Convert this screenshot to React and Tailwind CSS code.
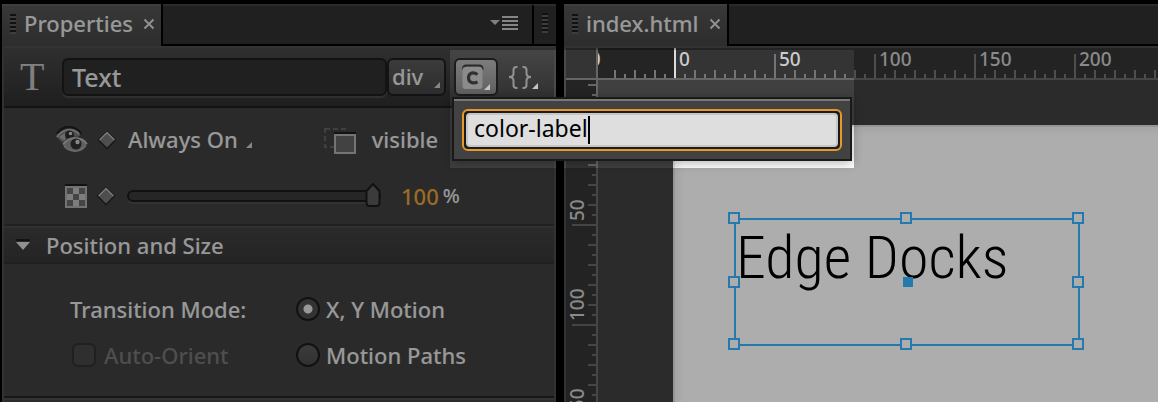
import { useState } from "react";

const range = (from, to) =>
  Array.from({ length: to - from + 1 }, (_, i) => from + i);

/* Ruler tick lengths: every 50 units, every 10 units, every 5 units. */
const tickLength = (i) => (i % 10 === 0 ? 24 : i % 2 === 0 ? 8 : 4);

function Grip() {
  return (
    <svg className="h-5 w-1.5 shrink-0" viewBox="0 0 6 20" aria-hidden="true">
      {range(0, 4).map((i) => (
        <g key={i}>
          <rect y={i * 4} width="6" height="2" fill="#1a1a1a" />
          <rect y={i * 4 + 2} width="6" height="2" fill="#5a5a5a" />
        </g>
      ))}
    </svg>
  );
}

function Corner({ className = "" }) {
  return (
    <svg className={`h-1.5 w-1.5 shrink-0 ${className}`} viewBox="0 0 6 6" aria-hidden="true">
      <path d="M6 0V6H0Z" fill="#c4c4c4" />
    </svg>
  );
}

function Tab({ title }) {
  return (
    <div className="flex h-[42px] items-center border-t-2 border-[#5c5c5c] bg-linear-to-b from-[#525252] to-[#434343] pr-1.5 pb-1 pl-2 text-[22px]">
      <Grip />
      <span className="ml-2 pb-0.5 leading-7">{title}</span>
      <button aria-label={`Close ${title}`} className="ml-2.5">
        <svg className="h-3 w-3" viewBox="0 0 12 12" fill="none" stroke="#d4d4d4" strokeWidth="2">
          <path d="M1.5 1.5L10.5 10.5M10.5 1.5L1.5 10.5" />
        </svg>
      </button>
    </div>
  );
}

function Diamond({ label }) {
  return (
    <button aria-label={label} className="shrink-0">
      <svg className="h-[22px] w-[22px]" viewBox="0 0 22 22">
        <path d="M11 0.500L21.500 11L11 21.500L0.500 11Z" fill="#242424" stroke="#4a4a4a" />
        <path d="M11 3.500L18.500 11L11 18.500L3.500 11Z" fill="#747474" />
        <path d="M3.500 11L11 3.500L18.500 11" fill="none" stroke="#b4b4b4" strokeWidth="1.500" />
      </svg>
    </button>
  );
}

function EyesIcon() {
  return (
    <svg className="h-7 w-8 shrink-0" viewBox="0 0 32 28" aria-hidden="true">
      <path d="M1 8C5 2 10 0 15 1C20 2 23 4 25 8" fill="none" stroke="#1c1c1c" strokeWidth="2" />
      <path d="M1 11C5 4 10 2.500 15 3C20 4 23 6 24.500 9L19 13L8 17C5 16 3 13 1 11Z" fill="#747474" />
      <path d="M1 11C6 3 17 1 23 8" fill="none" stroke="#a4a4a4" strokeWidth="2" />
      <path d="M3 11C6 9 7 8 10 7L9 14C6 14 5 12 3 11Z" fill="#a0a0a0" />
      <circle cx="13.500" cy="9" r="4.500" fill="#2c2c2c" />
      <circle cx="14.500" cy="7.500" r="1.800" fill="#c4c4c4" />
      <path d="M6 18C11 9 25 8 32 17C27 28 12 29 6 18Z" fill="#2c2c2c" />
      <path d="M7 19C12 11 25 10 31 18C25 27 13 27 7 19Z" fill="#8c8c8c" />
      <path d="M7 18.500C13 10 25 10 31 18" fill="none" stroke="#b0b0b0" strokeWidth="2" />
      <path d="M8 20C14 27 24 27 30 19.500" fill="none" stroke="#a0a0a0" strokeWidth="1.500" />
      <circle cx="20" cy="18" r="5.500" fill="#303030" />
      <circle cx="21.500" cy="16" r="2.200" fill="#c8c8c8" />
    </svg>
  );
}

function CheckerIcon() {
  return (
    <svg className="h-6 w-[22px] shrink-0" viewBox="0 0 22 24" aria-hidden="true">
      <rect width="22" height="2" fill="#1c1c1c" />
      <rect y="2" width="22" height="22" fill="#a8a8a8" />
      {[[2, 4], [14, 4], [8, 10], [2, 16], [14, 16]].map(([x, y]) => (
        <rect key={`${x}-${y}`} x={x} y={y} width="6" height="6" fill="#666666" />
      ))}
      {[[8, 4], [2, 10], [14, 10], [8, 16]].map(([x, y]) => (
        <rect key={`${x}-${y}`} x={x} y={y} width="6" height="6" fill="#b8b8b8" />
      ))}
    </svg>
  );
}

function OverflowIcon() {
  return (
    <svg className="h-[27px] w-8 shrink-0" viewBox="0 0 32 27" aria-hidden="true">
      <rect x="1" y="2" width="20" height="18" fill="none" stroke="#5f5f5f" strokeWidth="2" strokeDasharray="5 3" />
      <rect x="10" y="5" width="22" height="2" fill="#1c1c1c" />
      <rect x="11" y="8" width="20" height="18" fill="#626262" stroke="#acacac" strokeWidth="2" />
    </svg>
  );
}

function ClassIcon() {
  return (
    <svg className="h-[26px] w-[22px]" viewBox="0 0 22 26" aria-hidden="true">
      <path d="M1 6V5Q1 1.500 4.500 1.500H17Q20.500 1.500 20.500 5V6" fill="none" stroke="#2a2a2a" strokeWidth="2" />
      <rect x="0.500" y="3" width="20" height="22" rx="3" fill="#8b8b8b" />
      <path d="M15.500 10.500C10 7 6.500 10 6.500 13.800C6.500 18 10.500 20.500 15.500 17.800" fill="none" stroke="#303030" strokeWidth="3.200" />
    </svg>
  );
}

function BracesIcon() {
  return (
    <svg className="h-6 w-6" viewBox="0 0 24 24" fill="none" stroke="#929292" strokeWidth="2" aria-hidden="true">
      <path d="M9.500 2H8.500Q5.500 2 5.500 5V8.500Q5.500 12 1 12Q5.500 12 5.500 15.500V20Q5.500 23 8.500 23H9.500" />
      <path d="M14.500 2H15.500Q18.500 2 18.500 5V8.500Q18.500 12 23 12Q18.500 12 18.500 15.500V20Q18.500 23 15.500 23H14.500" />
    </svg>
  );
}

function ClassPicker() {
  const [value, setValue] = useState("color-label");
  return (
    <div className="relative ml-2">
      <button
        aria-label="Class"
        className="flex h-[38px] w-11 items-center rounded-md border-2 border-[#1c1c1c] bg-linear-to-b from-[#7c7c7c] to-[#606060] pl-1.5"
      >
        <ClassIcon />
        <Corner className="mb-1 self-end" />
      </button>
      {/* Spotlight that dims everything but the picker */}
      <div className="pointer-events-none absolute -top-2 -left-1 z-10 h-[118px] w-[404px] shadow-[0_0_5px_2000px_rgba(0,0,0,0.32)]" />
      <div className="absolute top-[39px] -left-0.5 z-20 w-[400px] border-2 border-[#1a1a1a] bg-[#424242] shadow-[0_2px_10px_rgba(0,0,0,0.3)]">
        <div className="border-t-2 border-[#787878] px-2 pt-2 pb-2">
          <div className="rounded-md border-2 border-[#e59a28] bg-[#1c1c1c] p-0.5">
            <label className="flex h-[34px] items-center rounded border-2 border-[#c6c6c6] bg-[#dedede] pl-1.5 text-[23px] font-normal text-black">
              <input
                aria-label="Class name"
                value={value}
                onChange={(e) => setValue(e.target.value)}
                className="h-[30px] bg-transparent pb-1 caret-transparent outline-none [field-sizing:content]"
              />
              <span className="h-7 w-0.5 bg-black" />
            </label>
          </div>
        </div>
      </div>
    </div>
  );
}

function OpacityRow() {
  const [opacity, setOpacity] = useState(100);
  return (
    <div className="flex h-14 items-center pl-[61px]">
      <CheckerIcon />
      <div className="ml-2 flex">
        <Diamond label="Opacity keyframe" />
      </div>
      <div className="relative ml-2.5 flex h-7 w-[254px] items-center">
        <div className="h-3 w-full rounded-full border-2 border-[#1a1a1a] bg-[#383838] shadow-[0_2px_0_#4a4a4a]" />
        <svg
          className="absolute h-[26px] w-4"
          viewBox="0 0 16 26"
          style={{ left: `calc((100% - 16px) * ${opacity / 100})` }}
          aria-hidden="true"
        >
          <path d="M8 1L14.500 8V20Q14.500 23 11.500 23H4.500Q1.500 23 1.500 20V8Z" fill="#575757" stroke="#1a1a1a" strokeWidth="2" />
        </svg>
        <input
          type="range"
          min="0"
          max="100"
          aria-label="Opacity"
          value={opacity}
          onChange={(e) => setOpacity(Number(e.target.value))}
          className="absolute inset-0 w-full opacity-0"
        />
      </div>
      <span className="ml-5 text-[#e29f36]">{opacity}</span>
      <span className="ml-1 text-[20px]">%</span>
    </div>
  );
}

function Radio({ label, ...props }) {
  return (
    <label className="flex items-center gap-1.5">
      <input
        type="radio"
        name="motion"
        className="h-6 w-6 appearance-none rounded-full border-2 border-[#1a1a1a] bg-linear-to-b from-[#575757] to-[#4a4a4a] checked:bg-[radial-gradient(circle,#e0e0e0_4px,#4c4c4c_5px)]"
        {...props}
      />
      {label}
    </label>
  );
}

function PropertiesPanel() {
  const [name, setName] = useState("Text");
  return (
    <section className="ml-0.5 flex w-[554px] shrink-0 flex-col bg-[#3f3f3f]">
      <div className="flex h-[42px] border-b-2 border-black bg-[#303030]">
        <div className="border-r-2 border-black">
          <Tab title="Properties" />
        </div>
        <div className="flex flex-1 items-center justify-end border-t-2 border-[#404040] pr-3.5 pb-1">
          <button aria-label="Panel menu">
            <svg className="h-4 w-7" viewBox="0 0 28 16">
              <path d="M0 5H10L5 10Z" fill="#bdbdbd" />
              <path d="M12 2H28M12 6H28M12 10H28M12 14H28" stroke="#c4c4c4" strokeWidth="2" />
            </svg>
          </button>
        </div>
        <div className="flex w-6 items-center justify-center border-t-2 border-l-2 border-t-[#404040] border-l-black pb-1">
          <Grip />
        </div>
      </div>

      <div className="flex flex-1 flex-col border-x-2 border-[#4a4a4a]">
        <div className="flex h-[62px] shrink-0 items-center border-t-2 border-b-2 border-t-[#4c4c4c] border-b-[#1c1c1c] bg-linear-to-b from-[#464646] to-[#2e2e2e] pl-4">
          <span className="w-6 font-['Liberation_Serif',serif] text-[40px] leading-10 text-[#bdbdbd]">T</span>
          <input
            aria-label="Element name"
            value={name}
            onChange={(e) => setName(e.target.value)}
            className="ml-[18px] h-[38px] w-[325px] rounded-md border-2 border-[#1c1c1c] bg-[#303030] px-2 text-[25px] shadow-[0_2px_0_#474747]"
          />
          <div className="relative">
            <select
              aria-label="Tag"
              className="h-[38px] w-[59px] appearance-none rounded-md border-2 border-[#1c1c1c] bg-linear-to-b from-[#585858] to-[#424242] pb-1.5 pl-[3px] text-[22px]"
            >
              <option>div</option>
            </select>
            <Corner className="pointer-events-none absolute right-1.5 bottom-2" />
          </div>
          <ClassPicker />
          <button aria-label="Actions" className="ml-2.5 flex items-center">
            <BracesIcon />
            <Corner className="self-end" />
          </button>
        </div>

        <div className="border-b-2 border-[#323232] pt-1 text-[22px]">
          <div className="flex h-14 items-center pl-[52px]">
            <EyesIcon />
            <div className="ml-2 flex">
              <Diamond label="Display keyframe" />
            </div>
            <button className="ml-2.5 flex items-center gap-2 pb-0.5">
              Always On
              <Corner className="mt-3" />
            </button>
            <div className="ml-[72px] flex items-center gap-4">
              <OverflowIcon />
              <button className="pb-0.5">visible</button>
            </div>
          </div>
          <OpacityRow />
        </div>

        <button className="flex h-[38px] shrink-0 items-center gap-4 border-t-2 border-b-2 border-t-[#484848] border-b-[#303030] bg-linear-to-b from-[#3f3f3f] to-[#363636] pl-3 text-[22px]">
          <svg className="h-3 w-3.5" viewBox="0 0 14 12" aria-hidden="true">
            <rect width="14" height="2" fill="#1c1c1c" />
            <path d="M0 3H14L7 11Z" fill="#d4d4d4" />
          </svg>
          Position and Size
        </button>

        <div className="grid grid-cols-[226px_1fr] gap-y-4 border-b-2 border-[#222222] pt-[30px] pb-[26px] pl-[66px] text-[22px] leading-[30px]">
          <span>Transition Mode:</span>
          <Radio label="X, Y Motion" defaultChecked />
          <label className="flex items-center gap-2 pl-0.5 text-[#747474]">
            <input
              type="checkbox"
              disabled
              className="h-6 w-6 appearance-none rounded-md border-2 border-[#303030] bg-[#464646]"
            />
            Auto-Orient
          </label>
          <Radio label="Motion Paths" />
        </div>
        <div className="flex-1 border-t-2 border-[#4c4c4c] bg-[#424242]" />
      </div>
    </section>
  );
}

function HorizontalRuler() {
  return (
    <div className="overflow-hidden border-b-2 border-[#666666] bg-[#343434]">
      <svg className="h-[30px] w-full text-[19px]" aria-label="Horizontal ruler">
        <rect width="76" height="30" fill="#242424" />
        {range(-6, 400).map((i) => (
          <line
            key={i}
            x1={77 + i * 10}
            x2={77 + i * 10}
            y1={i === 0 ? 0 : 30 - tickLength(i)}
            y2="30"
            stroke={i === 0 ? "#dcdcdc" : "#747474"}
            strokeWidth="2"
          />
        ))}
        {range(-1, 12).map((i) => (
          <text key={i} x={81 + i * 100} y="18" fill="#cccccc">
            {Math.abs(i * 50)}
          </text>
        ))}
      </svg>
    </div>
  );
}

function VerticalRuler() {
  return (
    <div className="overflow-hidden border-r-2 border-[#666666] bg-[#343434]">
      <svg className="h-full w-[30px] text-[19px]" aria-label="Vertical ruler">
        <rect width="30" height="45" fill="#242424" />
        {range(-4, 200).map((i) => (
          <line
            key={i}
            y1={45 + i * 10}
            y2={45 + i * 10}
            x1={30 - tickLength(i)}
            x2="30"
            stroke="#666666"
            strokeWidth="2"
          />
        ))}
        {range(0, 8).map((i) => (
          <text key={i} transform={`translate(18 ${41 + i * 100}) rotate(-90)`} fill="#cccccc">
            {i * 50}
          </text>
        ))}
      </svg>
    </div>
  );
}

const HANDLES = [
  "-left-2 -top-2",
  "left-[calc(50%-7px)] -top-2",
  "-right-1.5 -top-2",
  "-left-2 top-[calc(50%-6px)]",
  "-right-1.5 top-[calc(50%-6px)]",
  "-left-2 -bottom-1.5",
  "left-[calc(50%-7px)] -bottom-1.5",
  "-right-1.5 -bottom-1.5",
];

function DocumentPanel() {
  return (
    <section className="ml-2 flex min-w-0 flex-1 flex-col bg-[#404040]">
      <div className="flex h-[42px] border-b-2 border-black bg-[#303030]">
        <div className="border-r-2 border-black">
          <Tab title="index.html" />
        </div>
        <div className="flex-1 border-t-2 border-[#404040]" />
      </div>
      <div className="grid min-h-0 flex-1 grid-cols-[32px_1fr] grid-rows-[32px_1fr] border-t-2 border-l-2 border-[#4a4a4a]">
        <div className="border-r-2 border-b-2 border-[#666666] bg-[#343434]" />
        <HorizontalRuler />
        <VerticalRuler />
        <div className="min-w-0 overflow-hidden pt-[45px] pl-[75px]">
          <div className="relative h-full bg-white shadow-[inset_2px_2px_0_#dcdcdc,inset_8px_8px_8px_-4px_rgba(0,0,0,0.08)]">
            <div className="absolute top-[93px] left-[61px] h-32 w-[346px] border-2 border-[#36b4ff]">
              <p className="font-['Roboto_Condensed','Liberation_Sans_Narrow',sans-serif] text-[60px] leading-[76px] font-light whitespace-nowrap text-black">
                Edge Docks
              </p>
              {HANDLES.map((place) => (
                <span key={place} className={`absolute h-3 w-3 border-2 border-[#36b4ff] bg-white ${place}`} />
              ))}
              <span className="absolute top-[calc(50%-5px)] left-[calc(50%-4px)] h-2.5 w-2.5 bg-[#36b4ff]" />
            </div>
          </div>
        </div>
      </div>
    </section>
  );
}

export default function App() {
  return (
    <main className="flex h-screen w-full overflow-hidden bg-black pt-1 font-['Noto_Sans',sans-serif] font-medium text-[#e0e0e0]">
      <PropertiesPanel />
      <DocumentPanel />
    </main>
  );
}
